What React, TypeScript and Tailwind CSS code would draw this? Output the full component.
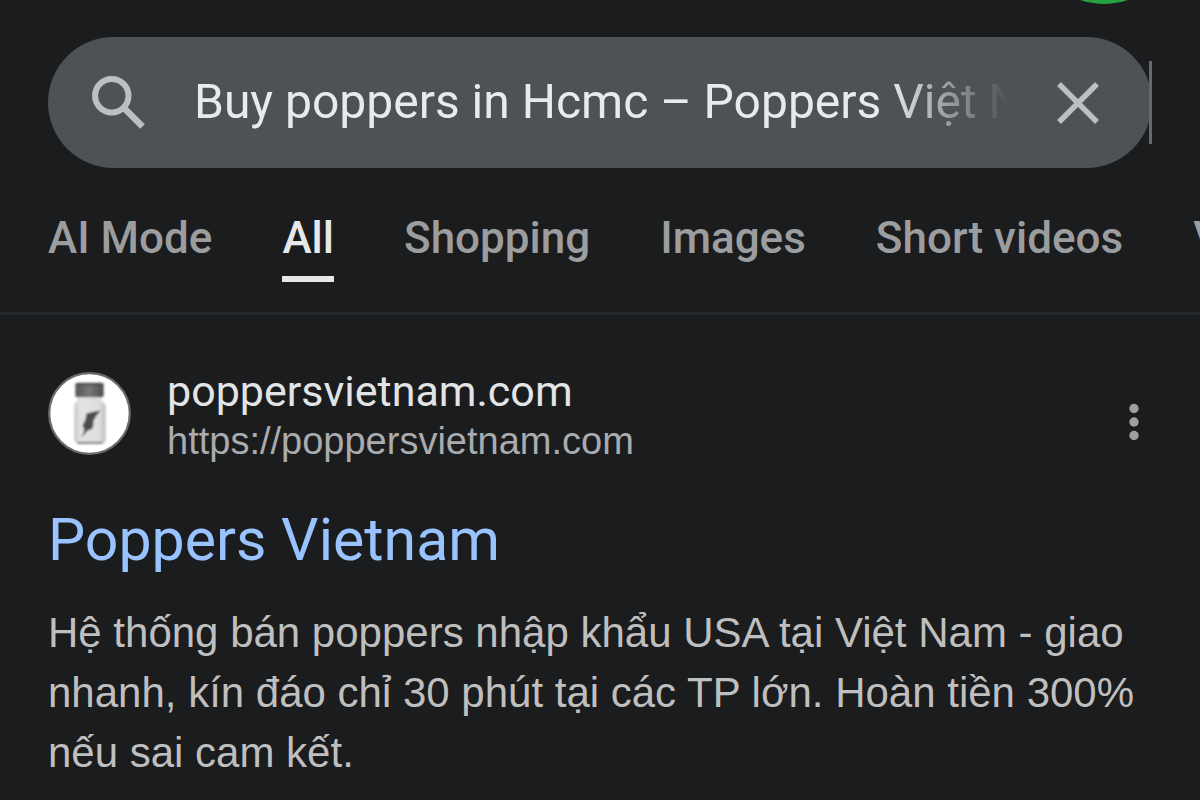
import { useState } from 'react';

const tabs = [
  { label: 'AI Mode', active: false },
  { label: 'All', active: true },
  { label: 'Shopping', active: false },
  { label: 'Images', active: false },
  { label: 'Short videos', active: false },
  { label: 'Videos', active: false },
];

function SearchIcon() {
  return (
    <svg viewBox="0 0 54 54" className="h-[54px] w-[54px] shrink-0" fill="none" stroke="#bdbfc2" aria-hidden="true">
      <circle cx="19.800" cy="19.800" r="16.700" strokeWidth="6" />
      <path d="M32 32 50.500 50.500" strokeWidth="6.500" />
    </svg>
  );
}

function CloseIcon() {
  return (
    <svg viewBox="0 0 44 44" className="h-11 w-11" fill="none" stroke="#bdbfc2" strokeWidth="5.500" aria-hidden="true">
      <path d="M3 3 41 41M41 3 3 41" />
    </svg>
  );
}

function BottleIcon() {
  return (
    <svg viewBox="0 0 82 82" className="mt-[9px] h-[83px] w-[83px] shrink-0" aria-hidden="true">
      <defs>
        <filter id="soft" x="-10%" y="-10%" width="120%" height="120%">
          <feGaussianBlur stdDeviation="0.9" />
        </filter>
        <linearGradient id="glass" x1="0" x2="1" y1="0" y2="0">
          <stop offset="0" stopColor="#c4c4c4" />
          <stop offset="0.18" stopColor="#e4e4e4" />
          <stop offset="0.8" stopColor="#dedede" />
          <stop offset="1" stopColor="#bcbcbc" />
        </linearGradient>
        <linearGradient id="cap" x1="0" x2="1" y1="0" y2="0">
          <stop offset="0" stopColor="#555" />
          <stop offset="0.5" stopColor="#777" />
          <stop offset="1" stopColor="#4c4c4c" />
        </linearGradient>
      </defs>
      <circle cx="41" cy="41" r="39.800" fill="#fff" stroke="#6b6c6e" strokeWidth="2.200" />
      <g filter="url(#soft)">
        <path d="M29 23H53V29Q57 31 57 35V66Q57 71 52 71H31Q26 71 26 66V35Q26 31 29 29Z" fill="url(#glass)" />
        <path d="M29 70H54" stroke="#7c7c7c" strokeWidth="2" />
        <rect x="27" y="10.500" width="28" height="14.500" rx="2" fill="url(#cap)" />
        <path d="M28 12H54" stroke="#4b4b4b" strokeWidth="2" />
        <path d="M52 38 46 39 38 41 37 47 34 53 36 57 33 65 39 58 44 56 45 51 45 48 48 43Z" fill="#4d4d4d" />
      </g>
    </svg>
  );
}

function MoreIcon() {
  return (
    <svg viewBox="0 0 10 38" className="h-[38px] w-[10px]" fill="#9e9fa1" aria-hidden="true">
      <circle cx="5" cy="5.500" r="4.700" />
      <circle cx="5" cy="19" r="4.700" />
      <circle cx="5" cy="32.500" r="4.700" />
    </svg>
  );
}

export default function App() {
  const [query, setQuery] = useState('Buy poppers in Hcmc – Poppers Việt Nam');

  return (
    <div className="relative min-h-screen overflow-hidden bg-[#1b1c1e] font-['Roboto','Noto_Sans',sans-serif]">
      <div className="absolute -top-[140px] right-6 h-36 w-36 rounded-full bg-[#25a33f]" />

      <header className="border-b-3 border-[#25282a] pt-[37px]">
        <div className="px-12">
          <form
            role="search"
            onSubmit={(event) => event.preventDefault()}
            className="relative flex h-[131px] items-center rounded-full bg-[#4e5155] pr-[52px] pl-11"
          >
            <SearchIcon />
            <input
              type="text"
              aria-label="Search"
              value={query}
              onChange={(event) => setQuery(event.target.value)}
              className="ml-12 h-20 min-w-0 flex-1 bg-transparent mask-r-from-[calc(100%-120px)] mask-r-to-100% pb-0.5 text-[48px] text-[#e8eaf0] outline-none"
            />
            <button type="button" aria-label="Clear search" onClick={() => setQuery('')} className="ml-12">
              <CloseIcon />
            </button>
            <span className="absolute top-6 right-0 h-[83px] w-[3px] bg-[#67696c]" />
          </form>
        </div>

        <nav aria-label="Search filters" className="mt-11 flex gap-[70px] px-12 pb-[30px] text-[44px] font-medium whitespace-nowrap">
          {tabs.map((tab) => (
            <a
              key={tab.label}
              href="#"
              aria-current={tab.active ? 'page' : undefined}
              className={
                tab.active
                  ? 'border-b-[6px] border-[#e6e6e8] pb-3 leading-[52px] text-[#e8e8ea]'
                  : 'border-b-[6px] border-transparent pb-3 leading-[52px] text-[#9c9d9e]'
              }
            >
              {tab.label}
            </a>
          ))}
        </nav>
      </header>

      <main className="px-12 pt-12">
        <article>
          <div className="flex items-start">
            <BottleIcon />
            <div className="ml-9 min-w-0 flex-1 pt-0.5">
              <p className="text-[43px] leading-[52px] text-[#e3e4e6]">poppersvietnam.com</p>
              <p className="font-['Liberation_Sans',sans-serif] text-[38px] leading-[48px] text-[#a9abae]">https://poppersvietnam.com</p>
            </div>
            <button type="button" aria-label="More options" className="mt-10 mr-[13px]">
              <MoreIcon />
            </button>
          </div>
          <h3 className="mt-[39px] text-[59px] leading-[72px] text-[#99c3ff]">
            <a href="#">Poppers Vietnam</a>
          </h3>
          <p className="mt-[27px] font-['Liberation_Sans',sans-serif] text-[42px] leading-[60px] text-[#bfbfbf]">
            Hệ thống bán poppers nhập khẩu USA tại Việt Nam - giao nhanh, kín đáo chỉ 30 phút tại các TP lớn. Hoàn tiền 300% nếu sai cam kết.
          </p>
        </article>
      </main>
    </div>
  );
}
